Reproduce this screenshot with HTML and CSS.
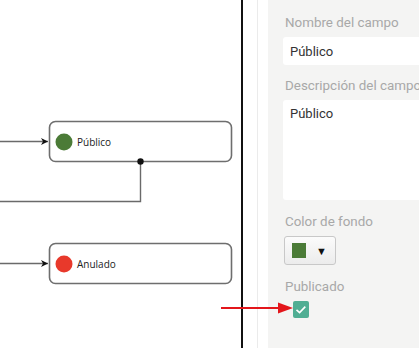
FILE: index.html
```html
<!DOCTYPE html>
<html lang="es">
<head>
    <meta charset="UTF-8">
    <meta name="viewport" content="width=device-width, initial-scale=1.0">
    <title>Editor de estados</title>
    <link rel="stylesheet" href="styles.css">
</head>
<body>
  <div class="canvas">
    <svg class="diagram" width="241" height="348" viewBox="0 0 241 348">
      <defs>
        <marker id="head" markerWidth="8" markerHeight="8" refX="7" refY="4" orient="auto" markerUnits="userSpaceOnUse">
          <path d="M0,0.5 L7,4 L0,7.5 L2,4 Z" fill="#111"/>
        </marker>
      </defs>
      <!-- edges -->
      <line x1="0" y1="141.5" x2="48" y2="141.5" class="edge" marker-end="url(#head)"/>
      <polyline points="140.5,161 140.5,201.5 0,201.5" class="edge" fill="none"/>
      <line x1="0" y1="263.5" x2="48" y2="263.5" class="edge" marker-end="url(#head)"/>

      <!-- nodes -->
      <rect x="49.5" y="121.5" width="182" height="40" rx="6" class="node"/>
      <circle cx="64" cy="142" r="8.5" fill="#4b7b37"/>
      <text x="77" y="145.5" class="node-label">Público</text>
      <circle cx="140.5" cy="161.5" r="3.2" fill="#111"/>

      <rect x="49.5" y="243.5" width="182" height="40" rx="6" class="node"/>
      <circle cx="64" cy="264" r="8.5" fill="#e8392b"/>
      <text x="77" y="267.5" class="node-label">Anulado</text>
    </svg>
  </div>
  <div class="divider"></div>
  <div class="gutter"></div>
  <div class="spacer"></div>
  <div class="panel">
    <label class="lbl" for="nombre">Nombre del campo</label>
    <input class="field" id="nombre" type="text" value="Público">

    <label class="lbl" for="desc">Descripción del campo</label>
    <textarea class="field area" id="desc">Público</textarea>

    <label class="lbl">Color de fondo</label>
    <button class="color-btn" type="button"><span class="swatch"></span><span class="caret">&#9660;</span></button>

    <label class="lbl">Publicado</label>
    <span class="check">
      <svg width="16" height="17" viewBox="0 0 16 17"><path d="M3.5 8.8 L6.6 11.6 L12.3 5.6" fill="none" stroke="#fff" stroke-width="1.6"/></svg>
    </span>
  </div>

  <svg class="pointer" width="74" height="12" viewBox="0 0 74 12">
    <line x1="0" y1="6" x2="60" y2="6" stroke="#e3161b" stroke-width="2"/>
    <path d="M57,0.5 L72,6 L57,11.5 Z" fill="#e3161b"/>
  </svg>
</body>
</html>
```

FILE: styles.css
```css
* {
    margin: 0;
    padding: 0;
    box-sizing: border-box;
}
body {
    display: flex;
    height: 348px;
    overflow: hidden;
    background: #fff;
    font-family: Roboto, "Noto Sans", sans-serif;
    position: relative;
}
.canvas {
    width: 241px;
    flex-shrink: 0;
}
.diagram {
    display: block;
}
.edge {
    stroke: #6a6a6a;
    stroke-width: 1.4;
}
.node {
    fill: #fff;
    stroke: #6e6e6e;
    stroke-width: 1.6;
}
.node-label {
    font-family: "Open Sans", sans-serif;
    font-size: 10px;
    fill: #222;
}
.divider {
    width: 2px;
    flex-shrink: 0;
    background: #111;
}
.gutter {
    width: 15px;
    flex-shrink: 0;
    border-right: 1px solid #ebebeb;
}
.spacer {
    width: 10px;
    flex-shrink: 0;
}
.panel {
    flex: 1;
    min-width: 0;
    overflow: hidden;
    background: #f4f4f3;
    padding: 14px 0 0 15px;
    display: flex;
    flex-direction: column;
    align-items: flex-start;
}
.lbl {
    display: block;
    font-size: 13.4px;
    line-height: 18px;
    color: #a8a8a8;
    padding-left: 2px;
    margin-bottom: 5px;
    white-space: nowrap;
}
.field {
    display: block;
    width: 200px;
    flex-shrink: 0;
    height: 28px;
    border: none;
    outline: none;
    border-radius: 3px;
    background: #fff;
    padding: 0 7px;
    font-family: Roboto, "Noto Sans", sans-serif;
    font-size: 13px;
    color: #333;
    margin-bottom: 12px;
}
.area {
    height: 100px;
    padding-top: 6px;
    resize: none;
    margin-bottom: 13px;
}
.color-btn {
    width: 52px;
    height: 29px;
    flex-shrink: 0;
    margin-left: 1px;
    border: 1px solid #c8c8c8;
    border-radius: 3px;
    background: linear-gradient(#fbfbfb, #ececec);
    display: flex;
    align-items: center;
    padding-left: 7px;
    margin-bottom: 13px;
}
.swatch {
    width: 14px;
    height: 15px;
    background: #4b7b37;
}
.caret {
    font-size: 11px;
    color: #111;
    margin-left: 10px;
}
.check {
    display: block;
    width: 16px;
    height: 17px;
    margin-left: 10px;
    border-radius: 2px;
    background: #50ae93;
}
.check svg {
    display: block;
}
.pointer {
    position: absolute;
    left: 221px;
    top: 302px;
}
```
